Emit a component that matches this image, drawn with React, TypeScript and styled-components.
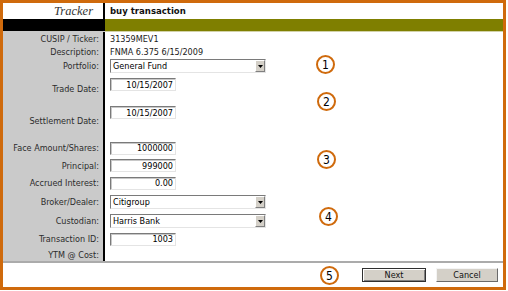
import styled, { createGlobalStyle } from "styled-components";

const ORANGE = "#cf6a0c";
const GRAY = "#cacaca";
const OLIVE = "#7f7f00";
const FONT = `"DejaVu Sans Condensed", "DejaVu Sans", sans-serif`;

const GlobalStyle = createGlobalStyle`
  html, body {
    margin: 0;
    padding: 0;
    background: #ffffff;
  }
  body {
    font-family: ${FONT};
    font-size: 9px;
    color: #000;
  }
`;

type Field =
  | { kind: "text"; value: string }
  | { kind: "input"; value: string }
  | { kind: "select"; value: string }
  | { kind: "none" };

type RowData = {
  label: string;
  height: number;
  top?: number;
  field: Field;
};

const ROWS: RowData[] = [
  { label: "CUSIP / Ticker:", height: 14, field: { kind: "text", value: "31359MEV1" } },
  { label: "Description:", height: 11, field: { kind: "text", value: "FNMA 6.375 6/15/2009" } },
  { label: "Portfolio:", height: 18, field: { kind: "select", value: "General Fund" } },
  { label: "Trade Date:", height: 28, top: 3, field: { kind: "input", value: "10/15/2007" } },
  { label: "Settlement Date:", height: 36, top: 3, field: { kind: "input", value: "10/15/2007" } },
  { label: "Face Amount/Shares:", height: 18, field: { kind: "input", value: "1000000" } },
  { label: "Principal:", height: 17, field: { kind: "input", value: "999000" } },
  { label: "Accrued Interest:", height: 18, field: { kind: "input", value: "0.00" } },
  { label: "Broker/Dealer:", height: 20, field: { kind: "select", value: "Citigroup" } },
  { label: "Custodian:", height: 18, field: { kind: "select", value: "Harris Bank" } },
  { label: "Transaction ID:", height: 18, field: { kind: "input", value: "1003" } },
  { label: "YTM @ Cost:", height: 13, field: { kind: "none" } },
];

// callout numbers, placed over the form
const CALLOUTS = [
  { n: 1, x: 313, y: 52 },
  { n: 2, x: 314, y: 89 },
  { n: 3, x: 314, y: 147 },
  { n: 4, x: 316, y: 204 },
  { n: 5, x: 317, y: 263 },
];

const App = () => {
  return (
    <>
      <GlobalStyle />
      <Frame>
        <Header>
          <Brand>Tracker</Brand>
          <Title>buy transaction</Title>
        </Header>
        <Bar>
          <BarLeft />
          <BarRight />
        </Bar>

        <Body>
          {ROWS.map((row) => (
            <Row key={row.label} $height={row.height}>
              <Label>{row.label}</Label>
              <FieldCell $top={row.top}>{renderField(row.field)}</FieldCell>
            </Row>
          ))}
        </Body>

        <Footer>
          <Button $default>Next</Button>
          <Button>Cancel</Button>
        </Footer>

        {CALLOUTS.map((c) => (
          <Callout key={c.n} style={{ left: c.x, top: c.y }}>
            {c.n}
          </Callout>
        ))}
      </Frame>
    </>
  );
};

const renderField = (field: Field) => {
  switch (field.kind) {
    case "text":
      return <Value>{field.value}</Value>;
    case "input":
      return <TextInput readOnly value={field.value} />;
    case "select":
      return (
        <SelectBox>
          <SelectText>{field.value}</SelectText>
          <ArrowButton>
            <svg width="5" height="3" viewBox="0 0 5 3">
              <path d="M0 0h5L2.5 3z" fill="#000" />
            </svg>
          </ArrowButton>
        </SelectBox>
      );
    default:
      return null;
  }
};

export default App;

const Frame = styled.div`
  position: relative;
  width: 506px;
  height: 290px;
  box-sizing: border-box;
  border: 3px solid ${ORANGE};
  display: flex;
  flex-direction: column;
  background: #fff;
`;

const Header = styled.div`
  display: grid;
  grid-template-columns: 102px 1fr;
  height: 16px;
`;

const Brand = styled.div`
  border-right: 2px solid #000;
  text-align: right;
  padding-right: 10px;
  font-family: "Liberation Serif", serif;
  font-style: italic;
  font-size: 12.5px;
  line-height: 16px;
  color: #333;
`;

const Title = styled.div`
  padding-left: 5px;
  font-family: ${FONT};
  font-weight: bold;
  font-size: 9.5px;
  line-height: 16px;
  color: #111;
`;

const Bar = styled.div`
  display: grid;
  grid-template-columns: 102px 1fr;
  height: 13px;
`;

const BarLeft = styled.div`
  background: #000;
  border-bottom: 1px solid ${GRAY};
`;

const BarRight = styled.div`
  background: ${OLIVE};
  border-bottom: 1px solid #d2d2a8;
`;

const Body = styled.div`
  display: flex;
  flex-direction: column;
`;

const Row = styled.div<{ $height: number }>`
  display: grid;
  grid-template-columns: 102px 1fr;
  height: ${(p) => p.$height}px;
`;

const Label = styled.div`
  background: ${GRAY};
  border-right: 2px solid #000;
  display: flex;
  align-items: center;
  justify-content: flex-end;
  padding-right: 4px;
  color: #2c2c2c;
  white-space: nowrap;
`;

const FieldCell = styled.div<{ $top?: number }>`
  display: flex;
  align-items: ${(p) => (p.$top !== undefined ? "flex-start" : "center")};
  padding-top: ${(p) => p.$top ?? 0}px;
  padding-left: 5px;
`;

const Value = styled.span`
  color: #1a1a1a;
`;

const TextInput = styled.input`
  box-sizing: border-box;
  width: 66px;
  height: 13px;
  padding: 0 2px 0 0;
  margin: 0;
  border: 1px solid;
  border-color: #7a7a7a #e4e4e4 #e4e4e4 #7a7a7a;
  box-shadow: inset 1px 1px 0 #c8c8c8;
  font-family: ${FONT};
  font-size: 9px;
  text-align: right;
  color: #000;
  background: #fff;
  outline: none;
`;

const SelectBox = styled.div`
  box-sizing: border-box;
  width: 156px;
  height: 14px;
  display: flex;
  align-items: stretch;
  border: 1px solid;
  border-color: #7a7a7a #e4e4e4 #e4e4e4 #7a7a7a;
  background: #fff;
`;

const SelectText = styled.span`
  flex: 1;
  padding-left: 2px;
  line-height: 12px;
  color: #000;
`;

const ArrowButton = styled.span`
  box-sizing: border-box;
  width: 10px;
  display: flex;
  align-items: center;
  justify-content: center;
  background: #d4d0c8;
  border: 1px solid;
  border-color: #fff #808080 #808080 #fff;
`;

const Footer = styled.div`
  flex: 1;
  display: flex;
  justify-content: flex-end;
  align-items: center;
  gap: 10px;
  padding-right: 5px;
  border-top: 2px solid #ababab;
`;

const Button = styled.button<{ $default?: boolean }>`
  box-sizing: border-box;
  width: ${(p) => (p.$default ? 64 : 62)}px;
  height: 14px;
  padding: 0;
  margin: 0;
  background: #d4d0c8;
  font-family: ${FONT};
  font-size: 9px;
  line-height: 12px;
  color: #111;
  border: 1px solid;
  border-color: ${(p) =>
    p.$default ? "#303030" : "#f4f4f4 #6a6a6a #6a6a6a #f4f4f4"};
  box-shadow: ${(p) =>
    p.$default ? "inset 1px 1px 0 #fff, inset -1px -1px 0 #808080" : "none"};
`;

const Callout = styled.div`
  position: absolute;
  box-sizing: border-box;
  width: 19px;
  height: 19px;
  border: 2px solid ${ORANGE};
  border-radius: 50%;
  display: flex;
  align-items: center;
  justify-content: center;
  font-family: "DejaVu Sans Condensed", "DejaVu Sans", sans-serif;
  font-size: 12px;
  line-height: 1;
  color: #000;
  background: #fff;
`;
